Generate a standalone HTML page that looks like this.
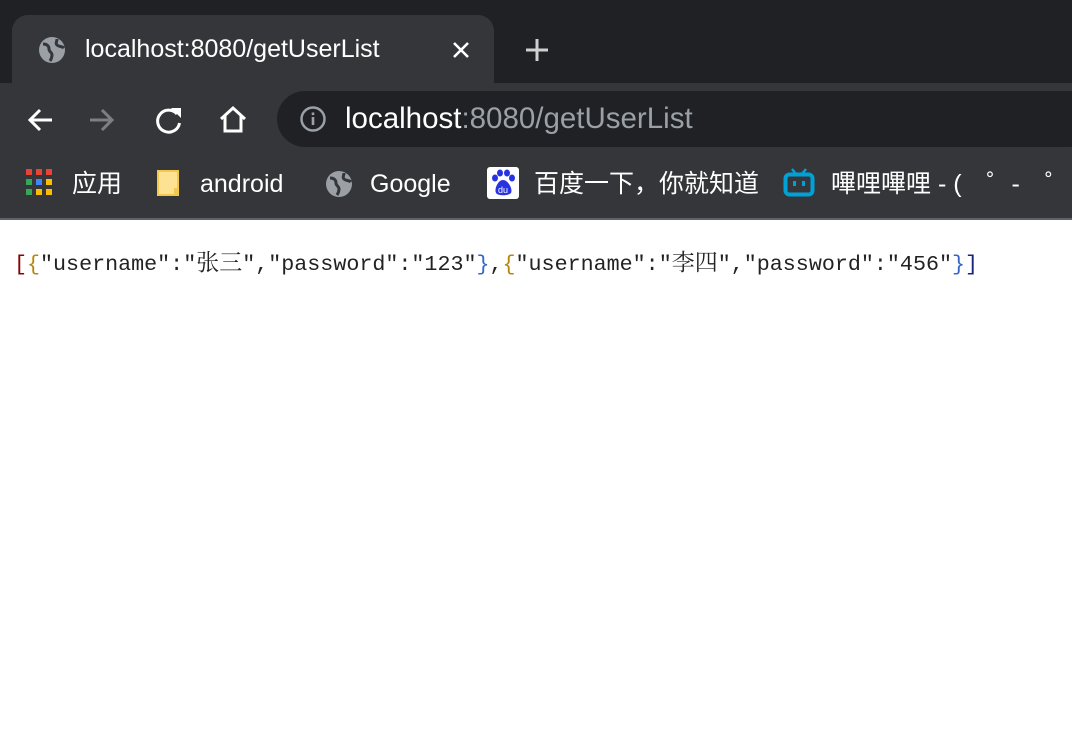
<!DOCTYPE html>
<html><head><meta charset="utf-8"><style>
*{margin:0;padding:0;box-sizing:border-box}
body{width:1072px;height:739px;background:#fff;overflow:hidden;font-family:"Liberation Sans","Noto Sans CJK SC",sans-serif;position:relative}
.top{position:absolute;left:0;top:0;width:1072px;height:83px;background:#202124}
.tab{position:absolute;left:12px;top:15px;width:482px;height:70px;background:#35363a;border-radius:16px 16px 0 0}
.tabt{position:absolute;left:85px;top:33px;color:#fff;font-size:25px;line-height:32px;white-space:nowrap}
.bar{position:absolute;left:0;top:83px;width:1072px;height:135px;background:#35363a}
.omni{position:absolute;left:277px;top:91px;width:820px;height:56px;background:#202124;border-radius:28px}
.url{position:absolute;left:345px;top:100px;font-size:29.5px;line-height:38px;color:#fff;white-space:nowrap}
.url span{color:#9aa0a6}
.bm{position:absolute;top:167px;color:#fff;font-size:25px;line-height:34px;white-space:nowrap}
.line{position:absolute;left:0;top:218px;width:1072px;height:2px;background:#5f6368}
.json{position:absolute;left:14px;top:245px;font-family:"Liberation Mono",monospace;font-size:21.7px;line-height:32px;color:#222;white-space:nowrap}
.c{font-family:"Noto Serif CJK SC","Noto Sans CJK SC",serif;font-size:23px}
</style></head><body>
<div class="top"></div>
<div class="tab"></div>
<svg style="position:absolute;left:37px;top:35px" width="30" height="30" viewBox="0 0 30 30"><circle cx="15" cy="15" r="13" fill="#9aa0a6"/><path d="M6 9c4 0 6 2 6 5s3 3 3 6-2 6-2 6M20 4c0 3-2 4 0 6s5 1 7 3" stroke="#35363a" stroke-width="3" fill="none"/></svg>
<div class="tabt">localhost:8080/getUserList</div>
<svg style="position:absolute;left:450px;top:39px" width="22" height="22" viewBox="0 0 22 22"><path d="M4 4L18 18M18 4L4 18" stroke="#fff" stroke-width="2.6"/></svg>
<svg style="position:absolute;left:523px;top:36px" width="28" height="28" viewBox="0 0 28 28"><path d="M14 3V25M3 14H25" stroke="#d0d0d0" stroke-width="3"/></svg>
<div class="bar"></div>
<svg style="position:absolute;left:25px;top:105px" width="30" height="30" viewBox="0 0 30 30"><path d="M27 15H5M15 5L5 15L15 25" stroke="#fff" stroke-width="3" fill="none"/></svg>
<svg style="position:absolute;left:87px;top:105px" width="30" height="30" viewBox="0 0 30 30"><path d="M3 15H25M15 5L25 15L15 25" stroke="#7d7f83" stroke-width="3" fill="none"/></svg>
<svg style="position:absolute;left:153px;top:104px" width="32" height="32" viewBox="0 0 32 32"><path d="M24 10A11 11 0 1 0 26.5 19" stroke="#fff" stroke-width="3" fill="none"/><path d="M18 4H28V14Z" fill="#fff"/></svg>
<svg style="position:absolute;left:217px;top:104px" width="32" height="32" viewBox="0 0 32 32"><path d="M4 15L16 4L28 15M8 12V27H24V12" stroke="#fff" stroke-width="3" fill="none" stroke-linejoin="miter"/></svg>
<div class="omni"></div>
<svg style="position:absolute;left:298px;top:104px" width="30" height="30" viewBox="0 0 30 30"><circle cx="15" cy="15" r="11.5" stroke="#9aa0a6" stroke-width="2.5" fill="none"/><rect x="13.7" y="13" width="2.6" height="8" fill="#9aa0a6"/><rect x="13.7" y="8.5" width="2.6" height="2.6" fill="#9aa0a6"/></svg>
<div class="url">localhost<span>:8080/getUserList</span></div>
<svg style="position:absolute;left:26px;top:169px" width="26" height="28" viewBox="0 0 26 28"><rect x="0" y="0" width="6" height="6" fill="#ea4335"/><rect x="10" y="0" width="6" height="6" fill="#ea4335"/><rect x="20" y="0" width="6" height="6" fill="#ea4335"/><rect x="0" y="10" width="6" height="6" fill="#34a853"/><rect x="10" y="10" width="6" height="6" fill="#4285f4"/><rect x="20" y="10" width="6" height="6" fill="#fbbc05"/><rect x="0" y="20" width="6" height="6" fill="#34a853"/><rect x="10" y="20" width="6" height="6" fill="#fbbc05"/><rect x="20" y="20" width="6" height="6" fill="#fbbc05"/></svg>
<div class="bm" style="left:72px">应用</div>
<svg style="position:absolute;left:156px;top:169px" width="26" height="28" viewBox="0 0 26 28"><path d="M2 2H22V26H2Z" fill="#fde293" stroke="#f2c94c" stroke-width="2"/><rect x="18" y="19" width="4" height="7" fill="#f2c94c"/></svg>
<div class="bm" style="left:200px">android</div>
<svg style="position:absolute;left:324px;top:169px" width="30" height="30" viewBox="0 0 30 30"><circle cx="15" cy="15" r="13" fill="#9aa0a6"/><path d="M6 9c4 0 6 2 6 5s3 3 3 6-2 6-2 6M20 4c0 3-2 4 0 6s5 1 7 3" stroke="#35363a" stroke-width="3" fill="none"/></svg>
<div class="bm" style="left:370px">Google</div>
<svg style="position:absolute;left:487px;top:167px" width="32" height="32" viewBox="0 0 32 32"><rect width="32" height="32" rx="3" fill="#fff"/><ellipse cx="8" cy="11" rx="3" ry="3.5" fill="#2932e1"/><ellipse cx="13" cy="6" rx="3" ry="3.5" fill="#2932e1"/><ellipse cx="20" cy="6" rx="3" ry="3.5" fill="#2932e1"/><ellipse cx="25" cy="11" rx="3" ry="3.5" fill="#2932e1"/><path d="M16 13C11 13 7 22 9 26C11 29 21 29 24 26C26 22 21 13 16 13Z" fill="#2932e1"/><text x="16" y="26" font-size="9" fill="#fff" text-anchor="middle" font-family="Liberation Sans">du</text></svg>
<div class="bm" style="left:534px">百度一下，你就知道</div>
<svg style="position:absolute;left:783px;top:167px" width="32" height="30" viewBox="0 0 32 30"><path d="M9 2L13 7M23 2L19 7" stroke="#00a1d6" stroke-width="2.5"/><rect x="2.5" y="7.5" width="27" height="20" rx="4" stroke="#00a1d6" stroke-width="4" fill="none"/><rect x="10" y="14" width="3" height="5" fill="#00a1d6"/><rect x="19" y="14" width="3" height="5" fill="#00a1d6"/></svg>
<div class="bm" style="left:831px">嗶哩嗶哩 - (　゜-　゜...</div>
<div class="line"></div>
<div class="json"><span style="color:#8b0000">[</span><span style="color:#b8860b">{</span>"username":"<span class="c">张三</span>","password":"123"<span style="color:#3366cc">}</span>,<span style="color:#b8860b">{</span>"username":"<span class="c">李四</span>","password":"456"<span style="color:#3366cc">}</span><span style="color:#1a237e">]</span></div>
</body></html>
